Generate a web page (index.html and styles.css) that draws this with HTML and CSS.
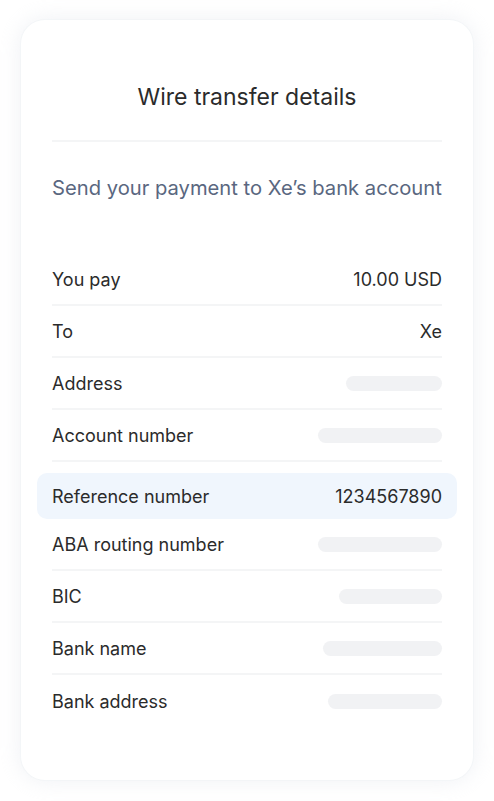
FILE: index.html
```html
<!DOCTYPE html>
<html>
<head>
<meta charset="utf-8">
<link rel="stylesheet" href="styles.css">
</head>
<body>
<div class="card">
  <h1 class="title">Wire transfer details</h1>
  <div class="divider"></div>
  <p class="subtitle">Send your payment to Xe’s bank account</p>
  <div class="rows">
    <div class="row"><span class="label">You pay</span><span class="value">10.00 USD</span></div>
    <div class="row"><span class="label">To</span><span class="value">Xe</span></div>
    <div class="row"><span class="label">Address</span><span class="skel" style="width:96px"></span></div>
    <div class="row"><span class="label">Account number</span><span class="skel" style="width:124px"></span></div>
    <div class="row highlight"><span class="label">Reference number</span><span class="value">1234567890</span></div>
    <div class="row"><span class="label">ABA routing number</span><span class="skel" style="width:124px"></span></div>
    <div class="row"><span class="label">BIC</span><span class="skel" style="width:103px"></span></div>
    <div class="row"><span class="label">Bank name</span><span class="skel" style="width:119px"></span></div>
    <div class="row last"><span class="label">Bank address</span><span class="skel" style="width:114px"></span></div>
  </div>
</div>
</body>
</html>
```
FILE: styles.css
```css
* { box-sizing: border-box; }
html, body { margin: 0; padding: 0; background: #ffffff; }
body {
  font-family: Inter, "Noto Sans", sans-serif;
  color: #2b2b2b;
  padding: 20px 21px 21px 21px;
}
.card {
  width: 452px;
  height: 760px;
  background: #ffffff;
  border-radius: 24px;
  box-shadow: 0 0 0 1px rgba(240,243,246,0.5), 0 0 22px rgba(226,230,236,0.6);
  padding: 0 31px;
  display: flex;
  flex-direction: column;
}
.title {
  margin: 0;
  padding-top: 63px;
  height: 120px;
  text-align: center;
  font-size: 23px;
  font-weight: 400;
  line-height: 28px;
  color: #2b2b2b;
}
.divider {
  height: 2px;
  background: #f4f5f6;
}
.subtitle {
  margin: 0;
  padding-top: 33px;
  font-size: 20.2px;
  line-height: 26px;
  color: #5a6780;
  height: 112px;
}
.rows { display: flex; flex-direction: column; }
.row {
  display: flex;
  justify-content: space-between;
  align-items: center;
  height: 52px;
  border-bottom: 2px solid #f4f5f6;
  font-size: 18px;
}
.row.last { border-bottom: none; }
.row.highlight {
  margin: 11px -15px 0 -15px;
  padding: 0 15px;
  height: 46px;
  background: #f0f6fd;
  border-radius: 10px;
  border-bottom: none;
}
.label { color: #2b2b2b; }
.value { color: #2b2b2b; }
.skel {
  display: block;
  height: 15px;
  border-radius: 8px;
  background: #f1f2f4;
}
```
